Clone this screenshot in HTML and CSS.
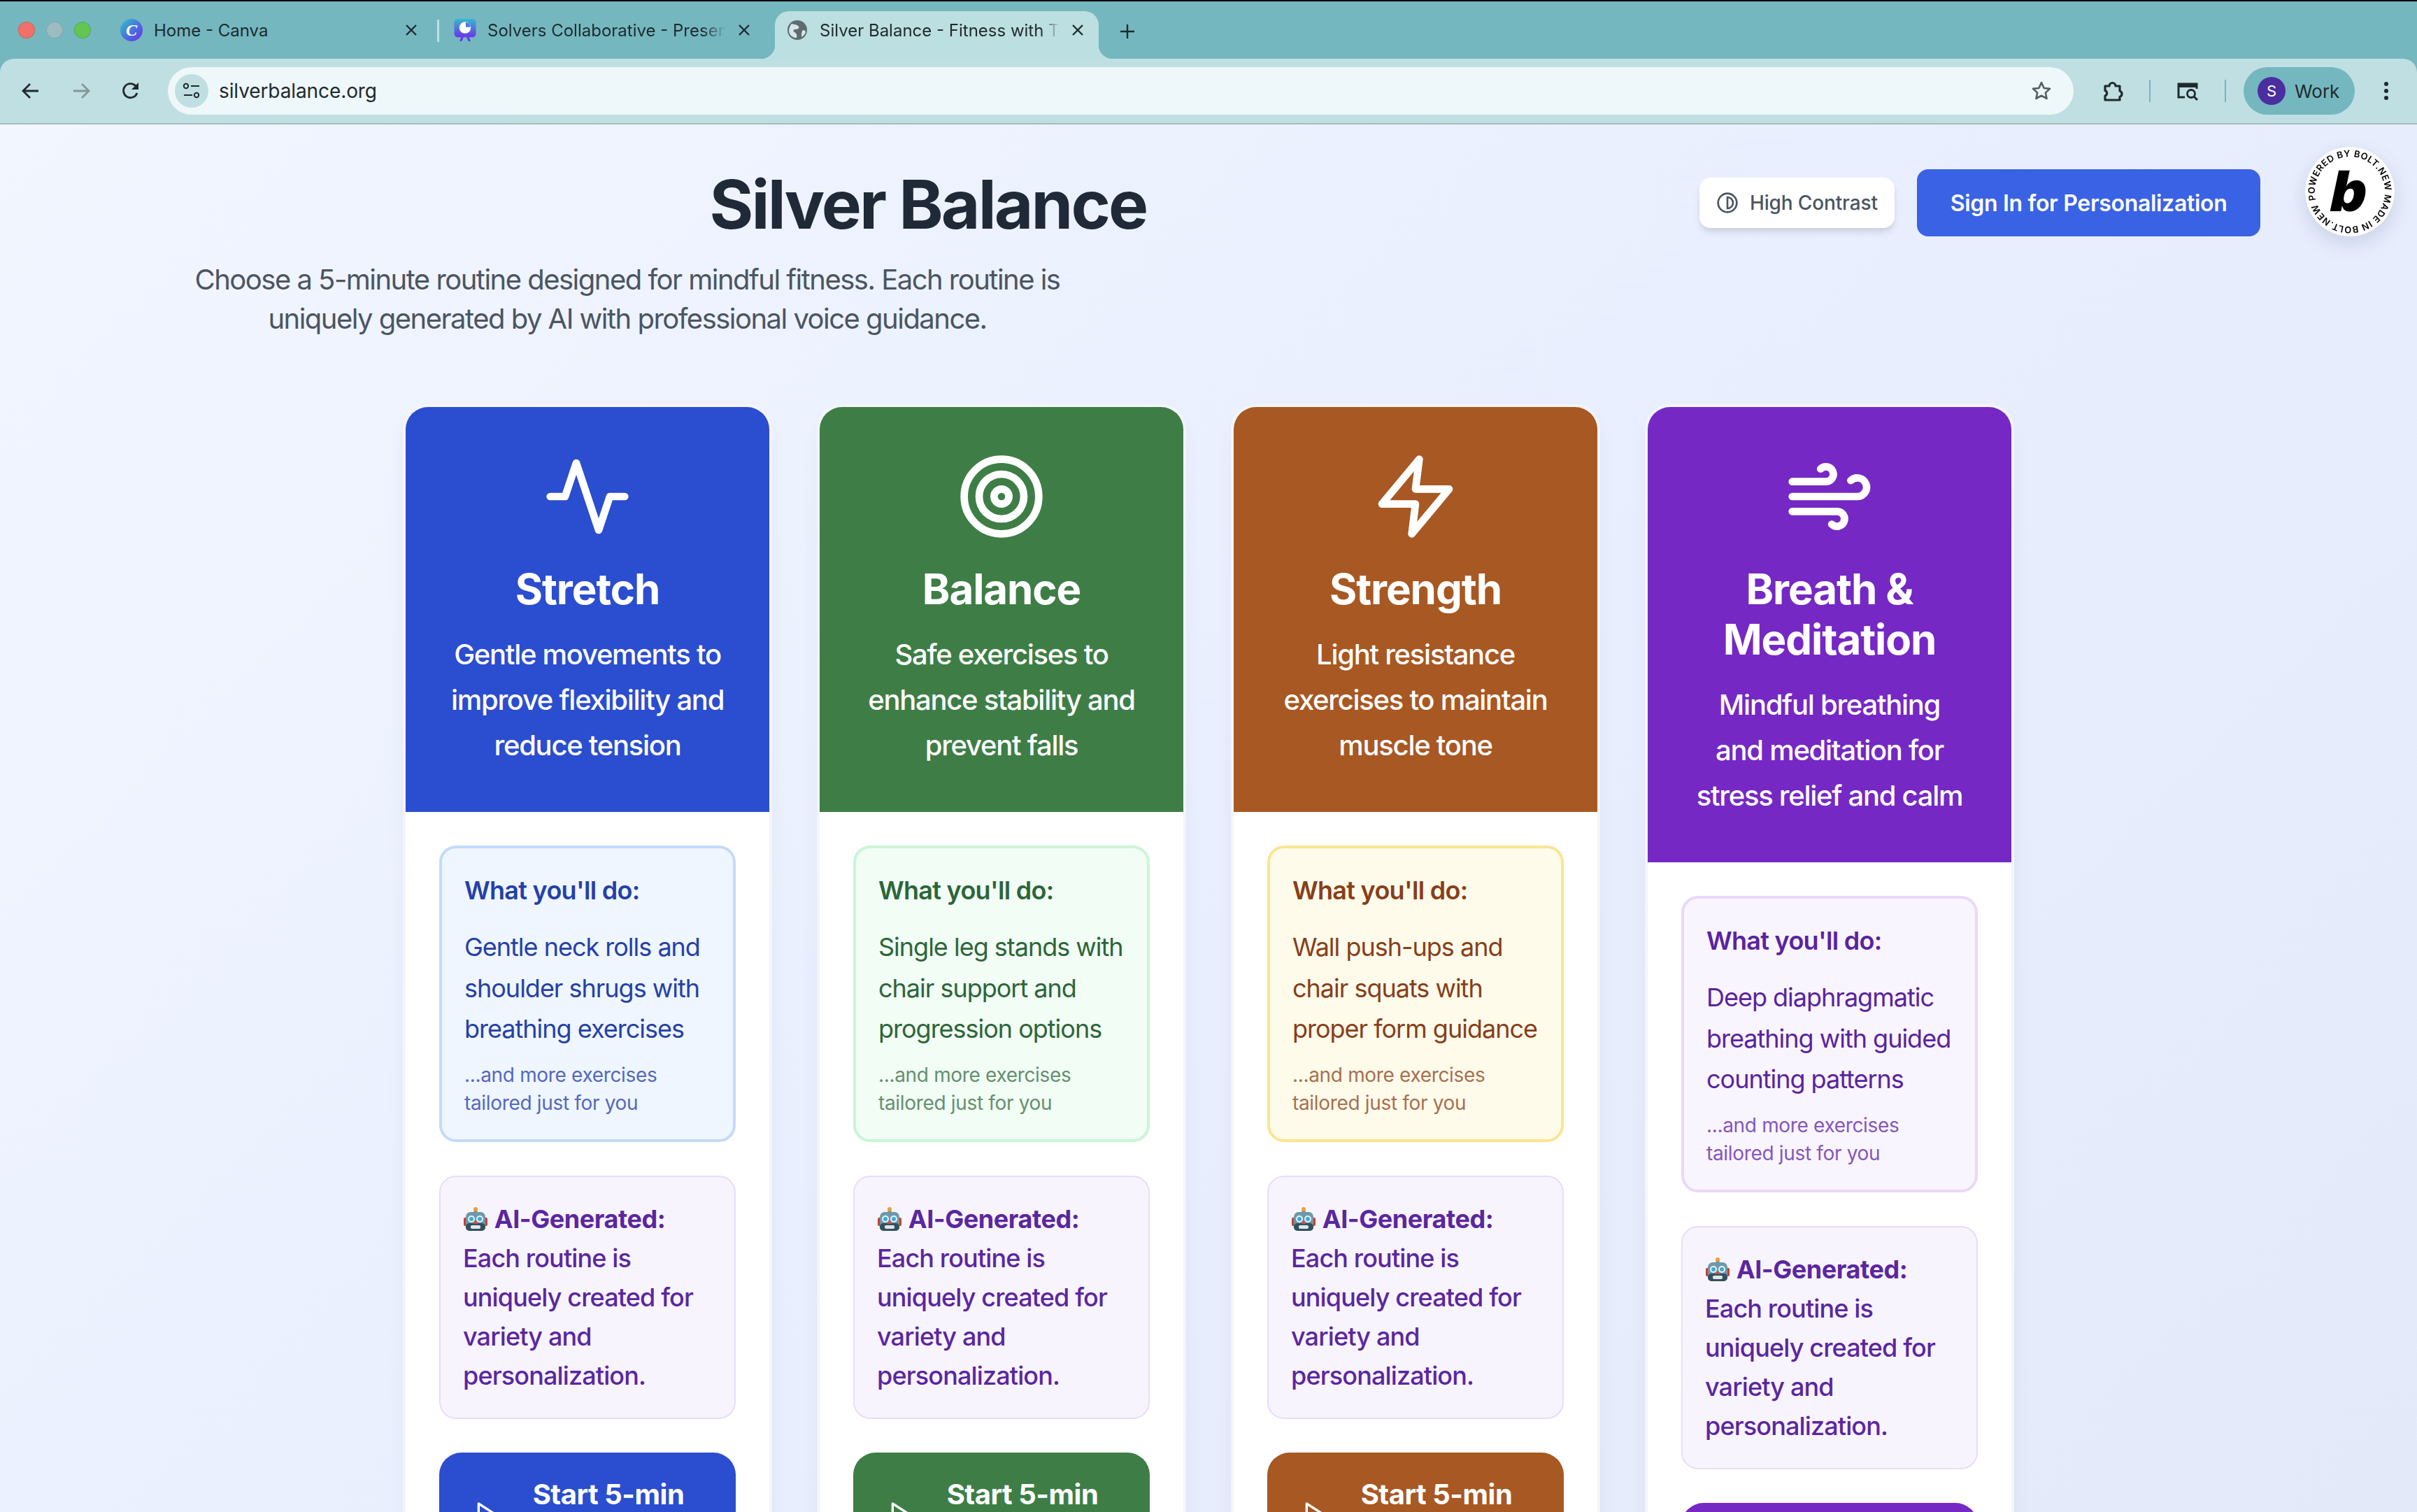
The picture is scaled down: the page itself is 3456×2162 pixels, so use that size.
FILE: index.html
```html
<!DOCTYPE html>
<html lang="en">
<head>
<meta charset="utf-8">
<title>Silver Balance - Fitness with AI</title>
<link rel="stylesheet" href="styles.css">
</head>
<body>
<svg class="defs" width="0" height="0" aria-hidden="true">
  <symbol id="robot" viewBox="0 0 36 36">
    <rect x="15.500" y="5" width="5" height="4" fill="#7d8b91"/>
    <circle cx="18" cy="4" r="3" fill="#f0a030"/>
    <rect x="1" y="16" width="5" height="12" rx="2" fill="#c8402f"/>
    <rect x="30" y="16" width="5" height="12" rx="2" fill="#c8402f"/>
    <rect x="4" y="8" width="28" height="27" rx="7" fill="#6f98a8"/>
    <rect x="4" y="24" width="28" height="11" rx="5" fill="#33505e"/>
    <circle cx="12" cy="18" r="5" fill="#e6f3f6"/>
    <circle cx="24" cy="18" r="5" fill="#e6f3f6"/>
    <circle cx="12" cy="18" r="3" fill="#3fa7d6"/>
    <circle cx="24" cy="18" r="3" fill="#3fa7d6"/>
    <path d="M18 19l3 6h-6z" fill="#d8483a"/>
    <rect x="11" y="27" width="14" height="5" rx="2" fill="#dfe7ea"/>
  </symbol>
  <symbol id="play" viewBox="0 0 24 24">
    <polygon points="5 3 19 12 5 21 5 3" fill="none" stroke="#fff" stroke-width="2" stroke-linejoin="round"/>
  </symbol>
</svg>

<div class="tabbar">
  <div class="lights">
    <span class="light light-red"></span>
    <span class="light light-grey"></span>
    <span class="light light-green"></span>
  </div>
  <div class="tab tab-first">
    <svg class="favicon" viewBox="0 0 32 32">
      <defs><linearGradient id="cv" x1="0" y1="0" x2="1" y2="1"><stop offset="0" stop-color="#33c4c9"/><stop offset=".55" stop-color="#4a6fe0"/><stop offset="1" stop-color="#6d2ee0"/></linearGradient></defs>
      <circle cx="16" cy="16" r="16" fill="url(#cv)"/>
      <text x="16" y="24" text-anchor="middle" class="canva-c">C</text>
    </svg>
    <span class="tab-title">Home - Canva</span>
    <svg class="close" viewBox="0 0 20 20"><path d="M3 3l14 14M17 3L3 17" stroke="#1f2a2e" stroke-width="2.400"/></svg>
  </div>
  <span class="tab-sep"></span>
  <div class="tab tab-second">
    <svg class="favicon" viewBox="0 0 32 33">
      <defs><linearGradient id="sc" x1="0" y1="0" x2="0" y2="1"><stop offset="0" stop-color="#35b8d0"/><stop offset="1" stop-color="#6a35e6"/></linearGradient></defs>
      <rect width="32" height="27" rx="5" fill="url(#sc)"/>
      <path d="M10 27l-2 6h3l3-6zM22 27l2 6h-3l-3-6z" fill="#6a35e6"/>
      <circle cx="16" cy="13" r="8.500" fill="#fff"/>
      <path d="M17 12V5a8 8 0 0 1 7 7z" fill="#4a7fe0"/>
    </svg>
    <span class="tab-title tab-fade">Solvers Collaborative - Presentation</span>
    <svg class="close" viewBox="0 0 20 20"><path d="M3 3l14 14M17 3L3 17" stroke="#1f2a2e" stroke-width="2.400"/></svg>
  </div>
  <div class="tab tab-active">
    <svg class="favicon favicon-globe" viewBox="0 0 28 28">
      <circle cx="14" cy="14" r="14" fill="#5f6b70"/>
      <path d="M6 5c4 1 8 1 10 4s-3 4-5 4-4 2-1 4 4 4 3 8c-4 0-8-2-10-6s0-11 3-14zM22 14c2 0 4 1 4 3-1 3-3 5-6 7 0-4 0-8 2-10z" fill="#d6e6e9"/>
    </svg>
    <span class="tab-title tab-fade-active">Silver Balance - Fitness with Technology</span>
    <svg class="close" viewBox="0 0 20 20"><path d="M3 3l14 14M17 3L3 17" stroke="#1f2a2e" stroke-width="2.400"/></svg>
  </div>
  <svg class="newtab" viewBox="0 0 24 24"><path d="M12 2v20M2 12h20" stroke="#1f2a2e" stroke-width="2.400"/></svg>
</div>

<div class="toolbar">
  <svg class="tool tool-back" viewBox="0 0 32 32"><path d="M27 16H6M15 6L5 16l10 10" fill="none" stroke="#1f2a2e" stroke-width="2.800"/></svg>
  <svg class="tool tool-fwd" viewBox="0 0 32 32"><path d="M5 16h21M17 6l10 10-10 10" fill="none" stroke="#83979b" stroke-width="2.800"/></svg>
  <svg class="tool tool-reload" viewBox="0 0 32 32"><path d="M25 19a10 10 0 1 1-2-10l3 3" fill="none" stroke="#1f2a2e" stroke-width="2.800"/><path d="M27 4v10H17z" fill="#1f2a2e"/></svg>
  <div class="omnibox">
    <span class="site-chip">
      <svg viewBox="0 0 26 26" width="26" height="26"><circle cx="5" cy="6" r="3.200" fill="none" stroke="#1f2a2e" stroke-width="2"/><path d="M12 6h12M2 19h12" stroke="#1f2a2e" stroke-width="2.200"/><circle cx="20" cy="19" r="3.200" fill="none" stroke="#1f2a2e" stroke-width="2"/></svg>
    </span>
    <span class="url">silverbalance.org</span>
    <svg class="star" viewBox="0 0 32 32"><path d="M16 4l3.700 8 8.300.9-6.200 5.700 1.800 8.400L16 22.700 8.400 27l1.800-8.400L4 12.900l8.300-.9z" fill="none" stroke="#555f63" stroke-width="2.600" stroke-linejoin="round"/></svg>
  </div>
  <svg class="tool tool-ext" viewBox="0 0 32 32"><path d="M5 9h6a4.500 4.500 0 0 1 9 0h6v7a4.500 4.500 0 0 1 0 8.500V29H5v-6a4 4 0 0 0 0-7.500z" fill="none" stroke="#1f2a2e" stroke-width="3.200" stroke-linejoin="round"/></svg>
  <span class="tool-sep tool-sep-a"></span>
  <svg class="tool" viewBox="0 0 32 32"><path d="M12 25H3V6h26v7" fill="none" stroke="#1f2a2e" stroke-width="3"/><path d="M3 6h26v5H3z" fill="#1f2a2e"/><circle cx="21" cy="20" r="5.500" fill="none" stroke="#1f2a2e" stroke-width="2.800"/><path d="M25 24l5 5" stroke="#1f2a2e" stroke-width="3"/></svg>
  <span class="tool-sep tool-sep-b"></span>
  <div class="profile">
    <span class="avatar">S</span>
    <span class="profile-name">Work</span>
  </div>
  <svg class="menu" viewBox="0 0 8 28"><circle cx="4" cy="4" r="3" fill="#1f2a2e"/><circle cx="4" cy="14" r="3" fill="#1f2a2e"/><circle cx="4" cy="24" r="3" fill="#1f2a2e"/></svg>
</div>

<main class="page">
  <header class="header">
    <div class="hero">
      <h1 class="hero-title">Silver Balance</h1>
      <p class="hero-sub">Choose a 5-minute routine designed for mindful fitness. Each routine is uniquely generated by AI with professional voice guidance.</p>
    </div>
    <div class="actions">
      <button class="btn-contrast">
        <svg class="contrast-icon" viewBox="0 0 24 24"><circle cx="12" cy="12" r="10" fill="none" stroke="#4b5563" stroke-width="2"/><path d="M12 18a6 6 0 0 0 0-12v12z" fill="none" stroke="#4b5563" stroke-width="2"/></svg>
        High Contrast
      </button>
      <button class="btn-signin">Sign In for Personalization</button>
    </div>
  </header>

  <svg class="bolt" viewBox="0 0 128 128">
    <circle cx="64" cy="64" r="64" fill="#fff"/>
    <defs><path id="ring" d="M14 64a50 50 0 1 1 100 0a50 50 0 1 1-100 0"/></defs>
    <g transform="rotate(-14 64 64)">
      <text class="bolt-ring"><textPath href="#ring" startOffset="0" textLength="308" lengthAdjust="spacing">POWERED BY BOLT.NEW MADE IN BOLT.NEW</textPath></text>
    </g>
    <text class="bolt-b" x="64" y="92" text-anchor="middle" transform="skewX(-12) translate(13 0)">b</text>
  </svg>

  <section class="cards">

    <article class="card card-blue">
      <div class="card-head">
        <svg class="card-icon" viewBox="0 0 24 24"><polyline points="22 12 18 12 15 21 9 3 6 12 2 12"/></svg>
        <h2 class="card-title">Stretch</h2>
        <p class="card-desc">Gentle movements to improve flexibility and reduce tension</p>
      </div>
      <div class="card-body">
        <div class="todo">
          <h3 class="todo-title">What you'll do:</h3>
          <p class="todo-text">Gentle neck rolls and shoulder shrugs with breathing exercises</p>
          <p class="todo-more">...and more exercises tailored just for you</p>
        </div>
        <div class="ai"><svg class="robot"><use href="#robot"/></svg> <strong class="ai-strong">AI-Generated:</strong> Each routine is uniquely created for variety and personalization.</div>
        <button class="start"><svg class="start-icon"><use href="#play"/></svg><span class="start-label">Start 5-min Routine</span></button>
      </div>
    </article>

    <article class="card card-green">
      <div class="card-head">
        <svg class="card-icon" viewBox="0 0 24 24"><circle cx="12" cy="12" r="10"/><circle cx="12" cy="12" r="6"/><circle cx="12" cy="12" r="2"/></svg>
        <h2 class="card-title">Balance</h2>
        <p class="card-desc">Safe exercises to enhance stability and prevent falls</p>
      </div>
      <div class="card-body">
        <div class="todo">
          <h3 class="todo-title">What you'll do:</h3>
          <p class="todo-text">Single leg stands with chair support and progression options</p>
          <p class="todo-more">...and more exercises tailored just for you</p>
        </div>
        <div class="ai"><svg class="robot"><use href="#robot"/></svg> <strong class="ai-strong">AI-Generated:</strong> Each routine is uniquely created for variety and personalization.</div>
        <button class="start"><svg class="start-icon"><use href="#play"/></svg><span class="start-label">Start 5-min Routine</span></button>
      </div>
    </article>

    <article class="card card-amber">
      <div class="card-head">
        <svg class="card-icon" viewBox="0 0 24 24"><polygon points="13 2 3 14 12 14 11 22 21 10 12 10 13 2"/></svg>
        <h2 class="card-title">Strength</h2>
        <p class="card-desc">Light resistance exercises to maintain muscle tone</p>
      </div>
      <div class="card-body">
        <div class="todo">
          <h3 class="todo-title">What you'll do:</h3>
          <p class="todo-text">Wall push-ups and chair squats with proper form guidance</p>
          <p class="todo-more">...and more exercises tailored just for you</p>
        </div>
        <div class="ai"><svg class="robot"><use href="#robot"/></svg> <strong class="ai-strong">AI-Generated:</strong> Each routine is uniquely created for variety and personalization.</div>
        <button class="start"><svg class="start-icon"><use href="#play"/></svg><span class="start-label">Start 5-min Routine</span></button>
      </div>
    </article>

    <article class="card card-purple">
      <div class="card-head">
        <svg class="card-icon" viewBox="0 0 24 24"><path d="M17.700 7.700a2.500 2.500 0 1 1 1.800 4.300H2"/><path d="M9.600 4.600A2 2 0 1 1 11 8H2"/><path d="M12.600 19.400A2 2 0 1 0 14 16H2"/></svg>
        <h2 class="card-title">Breath &amp; Meditation</h2>
        <p class="card-desc">Mindful breathing<br>and meditation for<br>stress relief and calm</p>
      </div>
      <div class="card-body">
        <div class="todo">
          <h3 class="todo-title">What you'll do:</h3>
          <p class="todo-text">Deep diaphragmatic breathing with guided counting patterns</p>
          <p class="todo-more">...and more exercises tailored just for you</p>
        </div>
        <div class="ai"><svg class="robot"><use href="#robot"/></svg> <strong class="ai-strong">AI-Generated:</strong> Each routine is uniquely created for variety and personalization.</div>
        <button class="start"><svg class="start-icon"><use href="#play"/></svg><span class="start-label">Start 5-min Routine</span></button>
      </div>
    </article>

  </section>
</main>
</body>
</html>
```
FILE: styles.css
```css
* { box-sizing: border-box; }
html, body { margin: 0; height: 2162px; overflow: hidden; }
body {
  font-family: Inter, "Liberation Sans", sans-serif;
  background: #000;
  padding-top: 2px;
  color: #1f2a2e;
}
.defs { position: absolute; }

/* browser chrome: tabs */
.tabbar {
  height: 82px;
  background: #74b7bf;
  display: flex;
  align-items: flex-start;
  padding: 14px 0 0 26px;
}
.lights { display: flex; gap: 16px; width: 104px; margin: 15px 42px 0 0; }
.light { width: 24px; height: 24px; border-radius: 50%; border: 1px solid rgba(0,0,0,.12); }
.light-red { background: #f1706a; }
.light-grey { background: #9dbcc2; }
.light-green { background: #62c554; }
.tab {
  height: 68px;
  display: flex;
  align-items: center;
  gap: 16px;
  padding-bottom: 14px;
  font-size: 24px;
  position: relative;
}
.tab-first { width: 426px; }
.tab-sep { width: 3px; height: 32px; background: #bcdfe1; margin: 12px 21px 0 27px; }
.tab-second { width: 425px; margin-right: 34px; }
.tab-active {
  width: 463px;
  padding-left: 16px;
  padding-right: 20px;
  background: #bcdfe1;
  border-radius: 20px 20px 0 0;
}
.tab-active::before, .tab-active::after {
  content: "";
  position: absolute;
  bottom: 0;
  width: 20px;
  height: 20px;
}
.tab-active::before { left: -20px; background: radial-gradient(circle at 0 0, transparent 20px, #bcdfe1 20.500px); }
.tab-active::after { right: -20px; background: radial-gradient(circle at 100% 0, transparent 20px, #bcdfe1 20.500px); }
.favicon { width: 32px; height: 32px; flex: none; }
.favicon-globe { width: 28px; height: 28px; margin: 0 2px; }
.canva-c { font: italic 700 24px "Liberation Serif", serif; fill: #fff; }
.tab-title { flex: 1; min-width: 0; white-space: nowrap; overflow: hidden; color: #1f2a2e; }
.tab-fade { -webkit-mask-image: linear-gradient(to right, #000 90%, transparent); mask-image: linear-gradient(to right, #000 90%, transparent); }
.tab-fade-active { -webkit-mask-image: linear-gradient(to right, #000 92%, transparent); mask-image: linear-gradient(to right, #000 92%, transparent); }
.close { width: 20px; height: 20px; flex: none; }
.newtab { width: 24px; height: 24px; margin: 17px 0 0 29px; }

/* browser chrome: toolbar */
.toolbar {
  height: 94px;
  background: #c0dfe2;
  border-bottom: 2px solid #a5bcbf;
  border-radius: 20px 20px 0 0;
  display: flex;
  align-items: center;
  padding-left: 28px;
  box-shadow: 0 -20px 0 #74b7bf;
}
.tool { width: 32px; height: 32px; flex: none; }
.tool-fwd { margin-left: 40px; }
.tool-reload { margin-left: 39px; }
.omnibox {
  width: 2725px;
  height: 68px;
  margin-left: 37px;
  border-radius: 34px;
  background: #eef7f9;
  display: flex;
  align-items: center;
  padding: 0 30px 0 10px;
  flex: none;
}
.site-chip {
  width: 48px;
  height: 48px;
  border-radius: 50%;
  background: #c0dfe2;
  display: flex;
  align-items: center;
  justify-content: center;
  margin-right: 15px;
}
.url { font-size: 28px; letter-spacing: -.1px; flex: 1; color: #1f2a2e; }
.star { width: 32px; height: 32px; }
.tool-ext { margin-left: 40px; }
.tool-sep { width: 2px; height: 32px; background: #74b7bf; flex: none; }
.tool-sep-a { margin: 0 37px 0 36px; }
.tool-sep-b { margin: 0 25px 0 37px; }
.profile {
  width: 159px;
  height: 68px;
  border-radius: 34px;
  background: #74b7bf;
  display: flex;
  align-items: center;
  padding-left: 20px;
  gap: 13px;
  flex: none;
}
.avatar {
  width: 40px;
  height: 40px;
  border-radius: 50%;
  background: #4b2ea0;
  color: #fff;
  font-size: 22px;
  display: flex;
  align-items: center;
  justify-content: center;
}
.profile-name { font-size: 26px; color: #1f2a2e; }
.menu { width: 8px; height: 28px; margin-left: 41px; flex: none; }

/* page */
.page {
  height: 1984px;
  overflow: hidden;
  position: relative;
  padding-top: 64px;
  background: linear-gradient(135deg, #f2f6ff 0%, #e9effe 50%, #e3e9f9 100%);
}
.header { display: flex; align-items: flex-start; }
.hero { width: 2430px; flex: none; }
.hero-title {
  margin: 0 0 30px;
  padding-left: 224px;
  font-size: 96px;
  line-height: 100px;
  font-weight: 700;
  letter-spacing: -.03em;
  text-align: center;
  color: #1f2937;
}
.hero-sub {
  width: 1280px;
  margin: 0 0 0 257px;
  font-size: 40px;
  line-height: 56px;
  letter-spacing: -.038em;
  text-align: center;
  color: #4b5563;
}
.actions { display: flex; align-items: center; gap: 32px; height: 96px; }
.btn-contrast {
  height: 72px;
  padding: 0 24px;
  border: 0;
  border-radius: 16px;
  background: #fff;
  color: #4b5563;
  font: 500 28px Inter, sans-serif;
  letter-spacing: -.005em;
  display: flex;
  align-items: center;
  gap: 16px;
  box-shadow: 0 8px 12px -2px rgba(31,41,55,.12), 0 4px 8px -2px rgba(31,41,55,.06);
}
.contrast-icon { width: 32px; height: 32px; }
.btn-signin {
  height: 96px;
  padding: 0 48px;
  border: 0;
  border-radius: 16px;
  background: #3a62e4;
  color: #fff;
  font: 600 32px Inter, sans-serif;
  letter-spacing: -.01em;
}
.bolt {
  position: absolute;
  top: 32px;
  right: 32px;
  width: 128px;
  height: 128px;
  border-radius: 50%;
  filter: drop-shadow(0 10px 14px rgba(50,60,120,.16));
}
.bolt-ring { font: 600 13px Inter, sans-serif; fill: #000; }
.bolt-b { font: 900 80px Inter, sans-serif; fill: #000; }

/* cards */
.cards {
  display: grid;
  grid-template-columns: repeat(4, 528px);
  gap: 64px;
  justify-content: center;
  margin-top: 94px;
  align-items: stretch;
}
.card {
  border: 4px solid #f3f5f8;
  border-radius: 36px;
  background: #fff;
  overflow: hidden;
  box-shadow: 0 20px 30px -6px rgba(60,70,130,.08);
}
.card-head { padding: 64px 48px 63px; text-align: center; color: #fff; }
.card-icon {
  display: block;
  width: 128px;
  height: 128px;
  margin: 0 auto 32px;
  fill: none;
  stroke: #fff;
  stroke-width: 2;
  stroke-linecap: round;
  stroke-linejoin: round;
}
.card-title { margin: 0 0 25px; font-size: 60px; line-height: 72px; font-weight: 700; letter-spacing: -.018em; }
.card-desc { margin: 0; font-size: 40px; line-height: 65px; font-weight: 500; letter-spacing: -.032em; }
.card-body { padding: 48px; display: flex; flex-direction: column; gap: 48px; }
.todo { border: 4px solid; border-radius: 24px; padding: 32px; }
.todo-title { margin: 0 0 24px; font-size: 36px; line-height: 56px; font-weight: 600; letter-spacing: -.02em; }
.todo-text { margin: 0; font-size: 36px; line-height: 58.500px; letter-spacing: -.028em; }
.todo-more { margin: 16px 0 0; font-size: 28px; line-height: 40px; letter-spacing: -.012em; }
.ai {
  border: 2px solid #e9dcfb;
  border-radius: 24px;
  background: #f7f4fe;
  padding: 32px;
  color: #5b26a0;
  font-size: 36px;
  line-height: 56px;
  font-weight: 500;
  letter-spacing: -.024em;
}
.ai-strong { font-weight: 700; letter-spacing: -.012em; }
.robot { width: 36px; height: 36px; vertical-align: -5px; }
.start {
  border: 0;
  border-radius: 32px;
  color: #fff;
  padding: 32px 48px;
  display: flex;
  align-items: center;
  gap: 20px;
  width: 100%;
  text-align: center;
  font: 700 40px/56px Inter, sans-serif;
  letter-spacing: -.012em;
}
.start-icon { width: 40px; height: 40px; flex: none; }
.start-label { flex: 1; }

.card-blue .card-head, .card-blue .start { background: #2b4dcf; }
.card-blue .todo { background: #eff6ff; border-color: #c3dafa; color: #2540a8; }
.card-blue .todo-more { color: #5468c0; }
.card-green .card-head, .card-green .start { background: #3e7e46; }
.card-green .todo { background: #f2fdf5; border-color: #c9f5d6; color: #2c6638; }
.card-green .todo-more { color: #64906f; }
.card-amber .card-head, .card-amber .start { background: #a85823; }
.card-amber .todo { background: #fefbeb; border-color: #fbe590; color: #873f1a; }
.card-amber .todo-more { color: #a87050; }
.card-purple .card-head, .card-purple .start { background: #7528c4; }
.card-purple .todo { background: #f9f5fe; border-color: #e9d8fb; color: #5a23a0; }
.card-purple .todo-more { color: #8457bd; }
```
